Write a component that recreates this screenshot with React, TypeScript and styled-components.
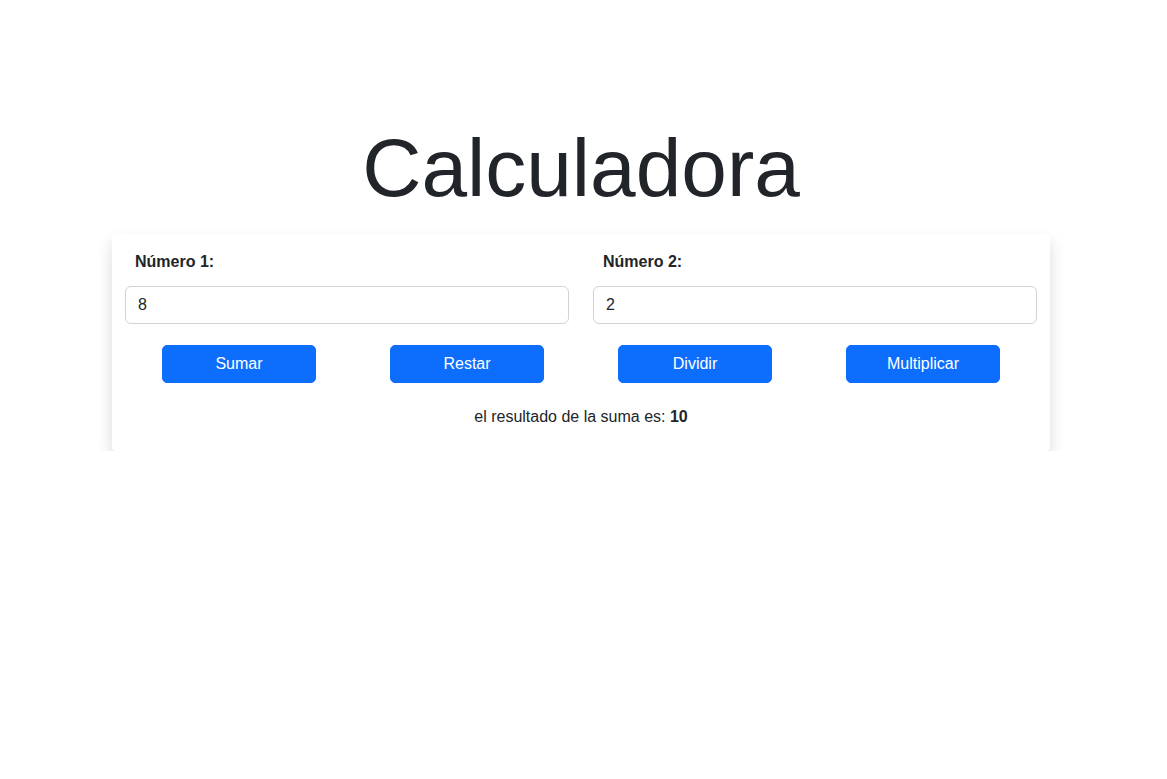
import { useState } from 'react';
import styled, { createGlobalStyle } from 'styled-components';

const GlobalStyle = createGlobalStyle`
  * {
    box-sizing: border-box;
  }

  body {
    margin: 0;
    background: #ffffff;
    color: #212529;
    font-family: "Liberation Sans", Arial, sans-serif;
    font-size: 16px;
    line-height: 1.5;
  }
`;

const Page = styled.main`
  display: flex;
  flex-direction: column;
  align-items: center;
  padding: 119px 5px 0 0;
`;

const Title = styled.h1`
  margin: 0 0 17px;
  font-size: 82px;
  font-weight: 400;
  line-height: 98px;
  color: #212529;
`;

const Card = styled.section`
  width: 938px;
  padding: 16px 13px 22px;
  background: #ffffff;
  border-radius: 4px;
  box-shadow: 0 0.5rem 1rem rgba(0, 0, 0, 0.15);
`;

const Fields = styled.div`
  display: grid;
  grid-template-columns: 1fr 1fr;
  column-gap: 24px;
`;

const Field = styled.div`
  display: flex;
  flex-direction: column;
  gap: 12px;
`;

const Label = styled.label`
  padding-left: 10px;
  font-weight: 700;
  font-size: 16px;
  line-height: 24px;
`;

const Input = styled.input`
  height: 38px;
  padding: 6px 12px;
  font-family: inherit;
  font-size: 16px;
  color: #212529;
  background: #ffffff;
  border: 1px solid #ced4da;
  border-radius: 6px;
  outline: none;
`;

const Actions = styled.div`
  display: grid;
  grid-template-columns: repeat(4, 1fr);
  margin-top: 21px;
  justify-items: center;
`;

const ActionButton = styled.button`
  width: 154px;
  height: 38px;
  font-family: inherit;
  font-size: 16px;
  color: #ffffff;
  background: #0d6efd;
  border: 1px solid #0d6efd;
  border-radius: 5px;
  cursor: pointer;
`;

const Result = styled.p`
  margin: 22px 0 0;
  text-align: center;
  line-height: 24px;

  strong {
    font-weight: 700;
  }
`;

type Op = 'suma' | 'resta' | 'division' | 'multiplicacion';

const operations: { key: Op; label: string }[] = [
  { key: 'suma', label: 'Sumar' },
  { key: 'resta', label: 'Restar' },
  { key: 'division', label: 'Dividir' },
  { key: 'multiplicacion', label: 'Multiplicar' },
];

function compute(op: Op, a: number, b: number) {
  switch (op) {
    case 'suma':
      return a + b;
    case 'resta':
      return a - b;
    case 'division':
      return a / b;
    default:
      return a * b;
  }
}

export default function App() {
  const [num1, setNum1] = useState('8');
  const [num2, setNum2] = useState('2');
  const [op, setOp] = useState<Op>('suma');

  const result = compute(op, Number(num1), Number(num2));

  return (
    <>
      <GlobalStyle />
      <Page>
        <Title>Calculadora</Title>
        <Card>
          <Fields>
            <Field>
              <Label htmlFor="num1">Número 1:</Label>
              <Input id="num1" value={num1} onChange={(e) => setNum1(e.target.value)} />
            </Field>
            <Field>
              <Label htmlFor="num2">Número 2:</Label>
              <Input id="num2" value={num2} onChange={(e) => setNum2(e.target.value)} />
            </Field>
          </Fields>
          <Actions>
            {operations.map((o) => (
              <ActionButton key={o.key} onClick={() => setOp(o.key)}>
                {o.label}
              </ActionButton>
            ))}
          </Actions>
          <Result>
            el resultado de la {op} es: <strong>{result}</strong>
          </Result>
        </Card>
      </Page>
    </>
  );
}
